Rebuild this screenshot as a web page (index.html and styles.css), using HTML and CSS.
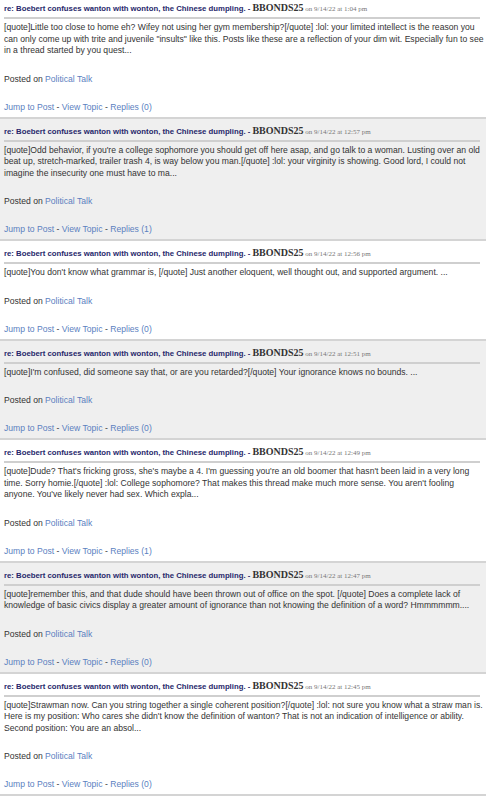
FILE: index.html
```html
<!DOCTYPE html>
<html lang="en">
<head>
    <meta charset="UTF-8">
    <meta name="viewport" content="width=device-width, initial-scale=1.0">
    <title>Recent Posts</title>
    <link rel="stylesheet" href="styles.css">
</head>
<body>
    <div class="post-list">
        <div class="post">
            <div class="post-head"><span class="post-title">re: Boebert confuses wanton with wonton, the Chinese dumpling. - </span><span class="post-author">BBONDS25</span><span class="post-date"> on 9/14/22 at 1:04 pm</span></div>
            <div class="post-body">[quote]Little too close to home eh? Wifey not using her gym membership?[/quote] :lol: your limited intellect is the reason you can only come up with trite and juvenile "insults" like this. Posts like these are a reflection of your dim wit. Especially fun to see in a thread started by you quest...</div>
            <div class="post-board">Posted on <a href="#">Political Talk</a></div>
            <div class="post-links"><a href="#">Jump to Post</a> - <a href="#">View Topic</a> - <a href="#">Replies (0)</a></div>
        </div>
        <div class="post">
            <div class="post-head"><span class="post-title">re: Boebert confuses wanton with wonton, the Chinese dumpling. - </span><span class="post-author">BBONDS25</span><span class="post-date"> on 9/14/22 at 12:57 pm</span></div>
            <div class="post-body">[quote]Odd behavior, if you're a college sophomore you should get off here asap, and go talk to a woman. Lusting over an old beat up, stretch-marked, trailer trash 4, is way below you man.[/quote] :lol: your virginity is showing. Good lord, I could not imagine the insecurity one must have to ma...</div>
            <div class="post-board">Posted on <a href="#">Political Talk</a></div>
            <div class="post-links"><a href="#">Jump to Post</a> - <a href="#">View Topic</a> - <a href="#">Replies (1)</a></div>
        </div>
        <div class="post">
            <div class="post-head"><span class="post-title">re: Boebert confuses wanton with wonton, the Chinese dumpling. - </span><span class="post-author">BBONDS25</span><span class="post-date"> on 9/14/22 at 12:56 pm</span></div>
            <div class="post-body">[quote]You don't know what grammar is, [/quote] Just another eloquent, well thought out, and supported argument. ...</div>
            <div class="post-board">Posted on <a href="#">Political Talk</a></div>
            <div class="post-links"><a href="#">Jump to Post</a> - <a href="#">View Topic</a> - <a href="#">Replies (0)</a></div>
        </div>
        <div class="post">
            <div class="post-head"><span class="post-title">re: Boebert confuses wanton with wonton, the Chinese dumpling. - </span><span class="post-author">BBONDS25</span><span class="post-date"> on 9/14/22 at 12:51 pm</span></div>
            <div class="post-body">[quote]I'm confused, did someone say that, or are you retarded?[/quote] Your ignorance knows no bounds. ...</div>
            <div class="post-board">Posted on <a href="#">Political Talk</a></div>
            <div class="post-links"><a href="#">Jump to Post</a> - <a href="#">View Topic</a> - <a href="#">Replies (0)</a></div>
        </div>
        <div class="post">
            <div class="post-head"><span class="post-title">re: Boebert confuses wanton with wonton, the Chinese dumpling. - </span><span class="post-author">BBONDS25</span><span class="post-date"> on 9/14/22 at 12:49 pm</span></div>
            <div class="post-body">[quote]Dude? That's fricking gross, she's maybe a 4. I'm guessing you're an old boomer that hasn't been laid in a very long time. Sorry homie.[/quote] :lol: College sophomore? That makes this thread make much more sense. You aren't fooling anyone. You've likely never had sex. Which expla...</div>
            <div class="post-board">Posted on <a href="#">Political Talk</a></div>
            <div class="post-links"><a href="#">Jump to Post</a> - <a href="#">View Topic</a> - <a href="#">Replies (1)</a></div>
        </div>
        <div class="post">
            <div class="post-head"><span class="post-title">re: Boebert confuses wanton with wonton, the Chinese dumpling. - </span><span class="post-author">BBONDS25</span><span class="post-date"> on 9/14/22 at 12:47 pm</span></div>
            <div class="post-body">[quote]remember this, and that dude should have been thrown out of office on the spot. [/quote] Does a complete lack of knowledge of basic civics display a greater amount of ignorance than not knowing the definition of a word? Hmmmmmm....</div>
            <div class="post-board">Posted on <a href="#">Political Talk</a></div>
            <div class="post-links"><a href="#">Jump to Post</a> - <a href="#">View Topic</a> - <a href="#">Replies (0)</a></div>
        </div>
        <div class="post">
            <div class="post-head"><span class="post-title">re: Boebert confuses wanton with wonton, the Chinese dumpling. - </span><span class="post-author">BBONDS25</span><span class="post-date"> on 9/14/22 at 12:45 pm</span></div>
            <div class="post-body">[quote]Strawman now. Can you string together a single coherent position?[/quote] :lol: not sure you know what a straw man is. Here is my position: Who cares she didn't know the definition of wanton? That is not an indication of intelligence or ability. Second position: You are an absol...</div>
            <div class="post-board">Posted on <a href="#">Political Talk</a></div>
            <div class="post-links"><a href="#">Jump to Post</a> - <a href="#">View Topic</a> - <a href="#">Replies (0)</a></div>
        </div>
    </div>
</body>
</html>
```

FILE: styles.css
```css
body {
    margin: 0;
    font-family: "Liberation Sans", Arial, sans-serif;
    font-size: 8.6px;
    color: #333;
    background-color: #fff;
}
a {
    color: #5b7fbf;
    text-decoration: none;
}
.post-list {
    margin-top: -4px; /* la page est un peu défilée */
}
.post {
    padding: 6px 0 4px 4px;
    border-bottom: 2px solid #d4d4d4;
    background-color: #fff;
}
.post:nth-child(even) {
    background-color: #efefef;
}
.post-head {
    height: 13px;
    margin-right: 6px;
    line-height: 13px;
    padding-bottom: 2px;
    border-bottom: 2px solid #cfcfcf;
    white-space: nowrap;
}
.post-head span {
    line-height: 10px;
}
.post-title {
    font-weight: bold;
    font-size: 7.75px;
    color: #27276b;
}
.post-author {
    font-family: "Liberation Serif", "Times New Roman", serif;
    font-weight: bold;
    font-size: 10px;
    color: #333;
}
.post-date {
    font-family: "Liberation Serif", "Times New Roman", serif;
    font-size: 7px;
    color: #777;
}
.post-body {
    margin-top: 3px;
    line-height: 11.5px;
}
.post-board {
    margin-top: 16px;
    line-height: 12px;
}
.post-links {
    margin-top: 16px;
    line-height: 12px;
}
```
